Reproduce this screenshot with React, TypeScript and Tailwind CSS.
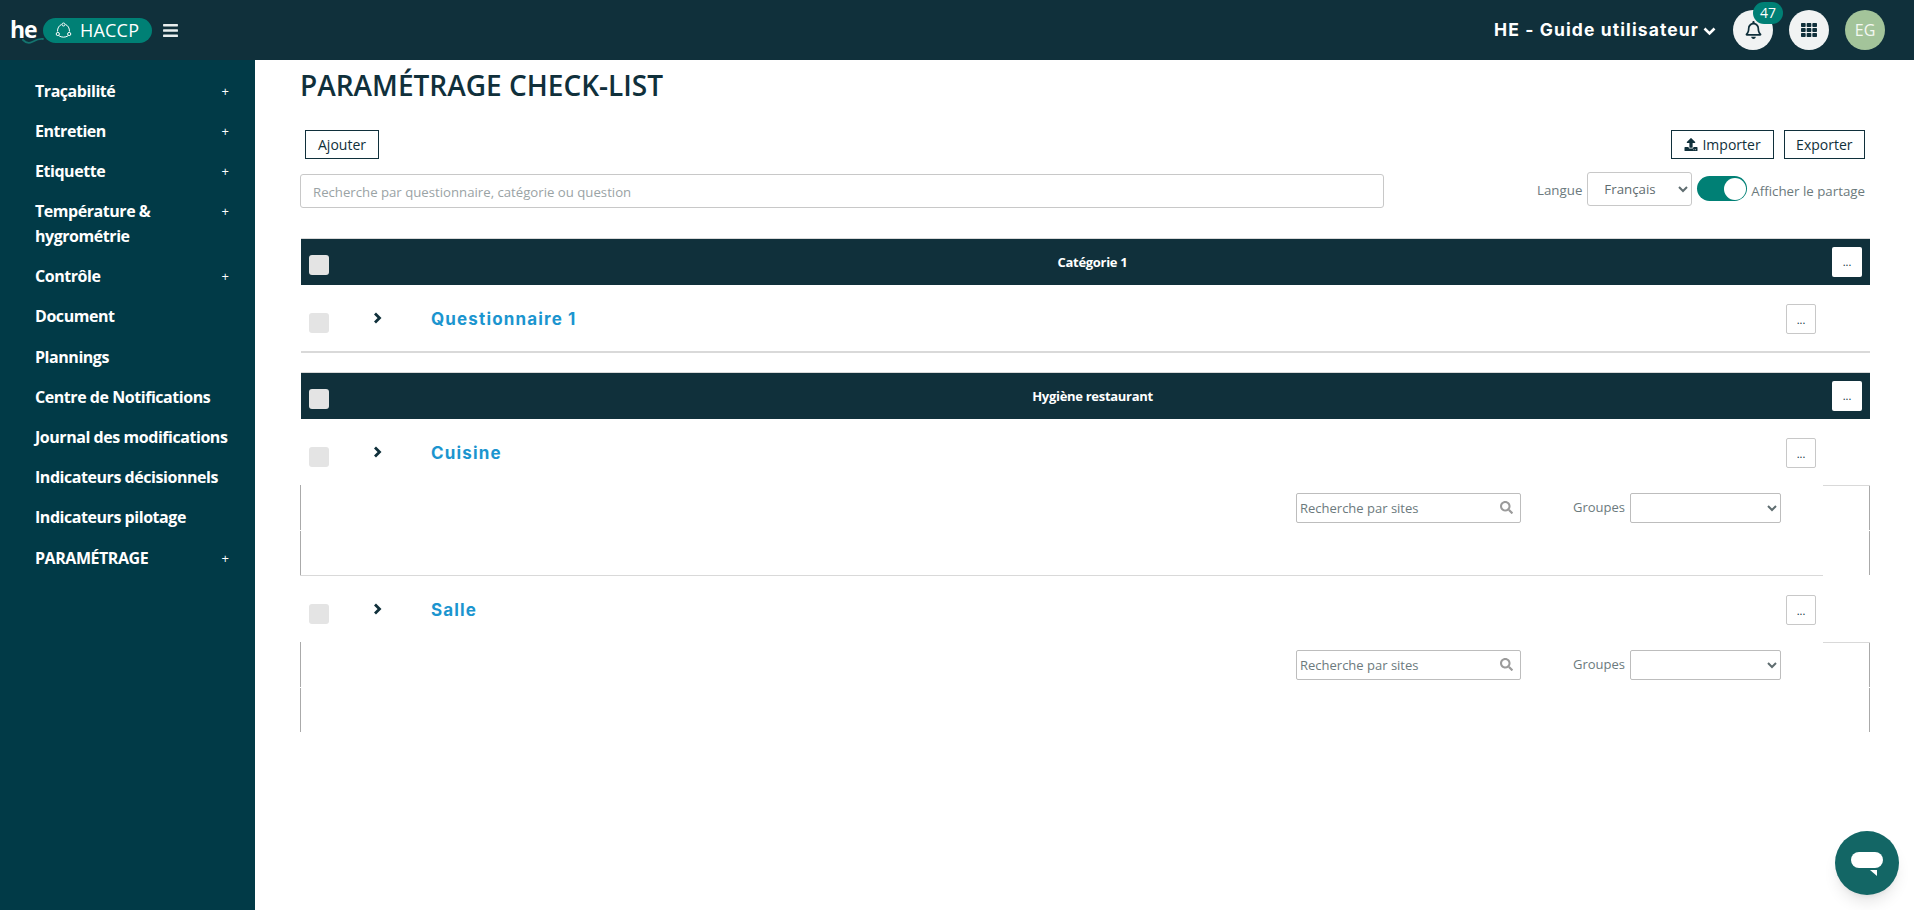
import { FaBars, FaRegBell, FaSearch, FaTh, FaUpload } from "react-icons/fa";

const menu = [
  { label: "Traçabilité", plus: true },
  { label: "Entretien", plus: true },
  { label: "Etiquette", plus: true },
  { label: "Température & hygrométrie", plus: true },
  { label: "Contrôle", plus: true },
  { label: "Document" },
  { label: "Plannings" },
  { label: "Centre de Notifications" },
  { label: "Journal des modifications" },
  { label: "Indicateurs décisionnels" },
  { label: "Indicateurs pilotage" },
  { label: "PARAMÉTRAGE", plus: true },
];

function Logo() {
  return (
    <div className="flex items-center">
      <div className="relative w-[23px] h-[42px] shrink-0">
        <span className="absolute left-0 top-[5px] text-white text-[23px] leading-[30px] font-bold tracking-[-1px]">he</span>
        <svg className="absolute left-[12px] top-[28px] z-10" width="22" height="9" viewBox="0 0 22 9" fill="none">
          <path d="M1 3c3 3 6 3.500 9 2s6-3.500 11-3" stroke="#14746f" strokeWidth="1.800" strokeLinecap="round" />
        </svg>
      </div>
      <div className="ml-[10px] w-[109px] h-[25px] rounded-full bg-[#008075] flex items-center pl-[12px] text-white">
        <svg width="17" height="17" viewBox="0 0 17 17" fill="none" stroke="white" strokeWidth="1">
          <path d="M6.500 2.500C4 3.500 2.500 6 2.500 9.500" />
          <path d="M10.500 2.500C13 3.500 14.500 6 14.500 9.500" />
          <path d="M4 13.800c2.500 1.800 6.500 1.800 9 0" />
          <circle cx="8.500" cy="2.500" r="1.500" />
          <circle cx="2.800" cy="12" r="1.600" />
          <circle cx="14.200" cy="12" r="1.600" />
        </svg>
        <span className="ml-[8px] text-[18px] leading-none tracking-[0.2px]">HACCP</span>
      </div>
    </div>
  );
}

function Header() {
  return (
    <header className="h-[60px] shrink-0 bg-[#10303b] flex items-center pl-[10px] pr-[29px]">
      <Logo />
      <FaBars className="ml-[10px] text-[#e8eeee] w-[17px] h-[17px]" />
      <div className="ml-auto flex items-center">
        <span className="font-['Inter',sans-serif] font-bold text-white text-[17.500px] tracking-[1.1px] whitespace-nowrap">HE - Guide utilisateur</span>
        <svg className="ml-[4px] mt-[3px]" width="13" height="9" viewBox="0 0 13 9" fill="none">
          <path d="M1.500 1.500 6.500 6.500 11.500 1.500" stroke="white" strokeWidth="2.600" />
        </svg>
        <div className="relative ml-[17px] w-[40px] h-[40px] rounded-full bg-[#f1f3f3] flex items-center justify-center">
          <FaRegBell className="text-[#10303b] w-[17px] h-[18px]" />
          <span className="absolute left-[20px] top-[-8px] w-[30px] h-[22px] rounded-full bg-[#008075] text-white text-[14px] leading-[22px] text-center">47</span>
        </div>
        <div className="ml-[16px] w-[40px] h-[40px] rounded-full bg-[#f1f3f3] flex items-center justify-center">
          <FaTh className="text-[#10303b] w-[16px] h-[16px]" />
        </div>
        <div className="ml-[16px] w-[40px] h-[40px] rounded-full bg-[#a3c49a] text-[#f4f8f2] text-[16px] flex items-center justify-center">EG</div>
      </div>
    </header>
  );
}

function Sidebar() {
  return (
    <aside className="w-[255px] shrink-0 bg-[#013a47] pt-[13.500px] pl-[35px] pr-[26px]">
      {menu.map((item) => (
        <div key={item.label} className="flex justify-between py-[5px] mb-[5.200px] text-white">
          <span className={`text-[16px] leading-[25px] font-bold tracking-[-0.45px] ${item.plus ? "max-w-[150px]" : "whitespace-nowrap"}`}>{item.label}</span>
          {item.plus && <span className="text-[13px] leading-[25px]">+</span>}
        </div>
      ))}
    </aside>
  );
}

function OutlineButton({ children, className }: { children: React.ReactNode; className?: string }) {
  return (
    <button className={`h-[29px] border border-[#10303b] text-[14px] text-[#10303b] flex items-center gap-[4px] bg-white ${className ?? "px-[12px]"}`}>
      {children}
    </button>
  );
}

function Toolbar() {
  return (
    <div>
      <div className="flex justify-between pl-[4px] pr-[5px] mt-[26px]">
        <OutlineButton>Ajouter</OutlineButton>
        <div className="flex gap-[10px]">
          <OutlineButton>
            <FaUpload className="w-[14px] h-[13px]" />
            Importer
          </OutlineButton>
          <OutlineButton className="px-[11.500px]">Exporter</OutlineButton>
        </div>
      </div>
      <div className="flex items-center mt-[15px] -ml-px">
        <div className="w-[1084px] h-[34px] border border-[#c8c8c8] rounded-[3px] flex items-center pl-[12px] pt-[3px] text-[13.200px] text-[#9aa3a5]">
          Recherche par questionnaire, catégorie ou question
        </div>
        <span className="ml-auto text-[13.300px] text-[#6c7a7d]">Langue</span>
        <select className="ml-[5px] -mt-[4px] w-[105px] h-[34px] border border-[#c8c8c8] rounded-[3px] bg-white pl-[12px] text-[13.300px] text-[#5f6d70]">
          <option>Français</option>
        </select>
        <div className="ml-[5px] -mt-[5px] w-[50px] h-[25px] rounded-full bg-[#008075] flex items-center justify-end pr-[1.500px]">
          <div className="w-[22px] h-[22px] rounded-full bg-white" />
        </div>
        <span className="ml-[4px] mr-[5px] pt-[2px] text-[13.300px] text-[#6c7a7d] whitespace-nowrap">Afficher le partage</span>
      </div>
    </div>
  );
}

function MoreButton({ dark }: { dark?: boolean }) {
  return (
    <button className={`w-[30px] h-[30px] rounded-[2px] bg-white text-[11px] leading-[30px] text-center text-[#10303b] ${dark ? "" : "border border-[#c8c8c8]"}`}>
      ...
    </button>
  );
}

function CategoryBar({ title, className }: { title: string; className?: string }) {
  return (
    <div className={`h-[47px] bg-[#10303b] border-t border-[#d9d9d9] flex items-center pl-[8px] pr-[8px] ${className ?? ""}`}>
      <span className="w-[20px] h-[20px] rounded-[3px] bg-[#e4e4e4] mt-[5px]" />
      <span className="flex-1 pl-[24px] text-center text-white text-[13px] font-bold tracking-[-0.3px] mt-[1px]">{title}</span>
      <MoreButton dark />
    </div>
  );
}

function QuestionRow({ title }: { title: string }) {
  return (
    <div className="h-[66px] flex items-start pl-[8px] pr-[54px]">
      <span className="w-[20px] h-[20px] rounded-[3px] bg-[#e4e4e4] mt-[28px]" />
      <svg className="ml-[44px] mt-[27px]" width="9" height="12" viewBox="0 0 9 12" fill="none">
        <path d="M2 1.500 6.500 6 2 10.500" stroke="#10303b" strokeWidth="2.800" />
      </svg>
      <span className="ml-[49px] mt-[21px] font-['Inter',sans-serif] font-bold text-[17px] leading-[26px] tracking-[1.15px] text-[#1b95cf]">{title}</span>
      <div className="ml-auto mt-[19px]">
        <MoreButton />
      </div>
    </div>
  );
}

function RowDetail({ last }: { last?: boolean }) {
  return (
    <div className="flex -ml-px">
      <div className={`w-[1523px] ${last ? "" : "border-b border-[#d9d9d9]"}`}>
        <div className="h-[45px] border-l border-[#aaaaaa] flex items-start pt-[8px]">
          <div className="ml-[995px] w-[225px] h-[30px] border border-[#bdbdbd] rounded-[2px] flex items-center pl-[3px] pr-[7px] pt-[2px] text-[13px] text-[#6c7a7d]">
            Recherche par sites
            <FaSearch className="ml-auto -mt-[3px] w-[13px] h-[13px] text-[#9b9b9b]" />
          </div>
          <span className="ml-[52px] text-[13px] leading-[28px] text-[#6c7a7d]">Groupes</span>
          <select className="ml-[5px] w-[151px] h-[30px] border border-[#bdbdbd] rounded-[2px] bg-white text-[#5f6d70]" />
        </div>
        <div className="h-[44px] mt-px border-l border-[#aaaaaa]" />
      </div>
      <div className="w-[47px] border-t border-[#d9d9d9]">
        <div className="h-[44px] border-r border-[#aaaaaa]" />
        <div className="h-[44px] mt-px border-r border-[#aaaaaa]" />
      </div>
    </div>
  );
}

export default function App() {
  return (
    <div className="relative h-screen overflow-hidden flex flex-col bg-white font-['Open_Sans',sans-serif]">
      <Header />
      <div className="flex flex-1 min-h-0">
        <Sidebar />
        <main className="flex-1 pl-[46px] pr-[44px]">
          <h1 className="text-[28px] leading-[38px] text-[#10303b] font-semibold mt-[6px] -ml-[1px]">PARAMÉTRAGE CHECK-LIST</h1>
          <div className="mt-[1px]">
            <Toolbar />
          </div>
          <CategoryBar title="Catégorie 1" className="mt-[30px]" />
          <QuestionRow title="Questionnaire 1" />
          <div className="h-[2px] bg-[#d9d9d9]" />
          <CategoryBar title="Hygiène restaurant" className="mt-[19px]" />
          <QuestionRow title="Cuisine" />
          <RowDetail />
          <QuestionRow title="Salle" />
          <RowDetail last />
        </main>
      </div>
      <button className="absolute right-[15px] bottom-[15px] w-[64px] h-[64px] rounded-full bg-[#136665] shadow-lg flex items-center justify-center">
        <svg width="32" height="26" viewBox="0 0 32 26">
          <rect x="0" y="2" width="32" height="16" rx="8" fill="white" />
          <path d="M19 20h7v6z" fill="white" />
        </svg>
      </button>
    </div>
  );
}
